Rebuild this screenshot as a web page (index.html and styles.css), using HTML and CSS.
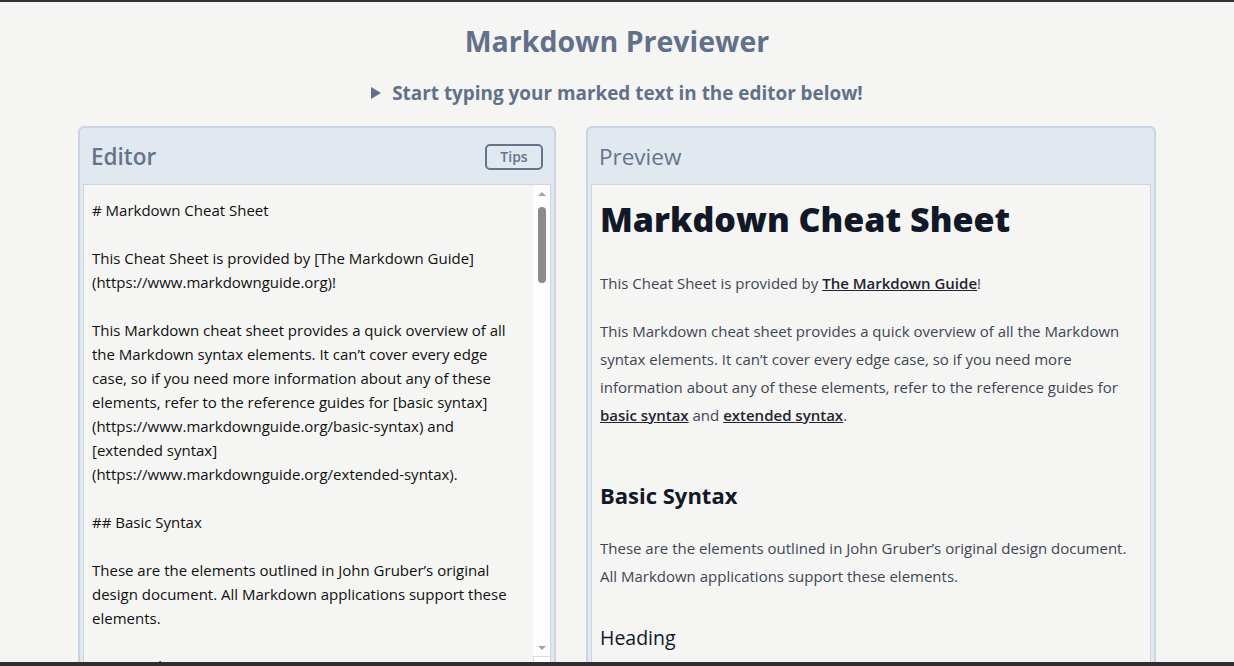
FILE: index.html
```html
<!DOCTYPE html>
<html lang="en">
<head>
<meta charset="utf-8">
<title>Markdown Previewer</title>
<link rel="stylesheet" href="styles.css">
</head>
<body>
<header class="top">
  <h1 class="title">Markdown Previewer</h1>
  <p class="subtitle"><span class="tri"></span>Start typing your marked text in the editor below!</p>
</header>
<main class="panels">
  <section class="panel editor-panel">
    <div class="panel-head">
      <h2 class="panel-title editor-title">Editor</h2>
      <button class="tips">Tips</button>
    </div>
    <div class="editor-box">
      <div class="editor-text"># Markdown Cheat Sheet

This Cheat Sheet is provided by [The Markdown Guide]
(https://www.markdownguide.org)!

This Markdown cheat sheet provides a quick overview of all
the Markdown syntax elements. It can’t cover every edge
case, so if you need more information about any of these
elements, refer to the reference guides for [basic syntax]
(https://www.markdownguide.org/basic-syntax) and
[extended syntax]
(https://www.markdownguide.org/extended-syntax).

## Basic Syntax

These are the elements outlined in John Gruber’s original
design document. All Markdown applications support these
elements.

### Heading

# H1
## H2
### H3</div>
      <div class="scrollbar">
        <div class="arrow arrow-up"></div>
        <div class="thumb"></div>
        <div class="spacer"></div>
        <div class="arrow arrow-down"></div>
        <div class="corner"></div>
      </div>
    </div>
  </section>
  <section class="panel preview-panel">
    <div class="panel-head">
      <h2 class="panel-title preview-title">Preview</h2>
    </div>
    <div class="preview-box">
      <h1 class="md-h1">Markdown Cheat Sheet</h1>
      <p class="md-p">This Cheat Sheet is provided by <a class="md-a" href="#">The Markdown Guide</a>!</p>
      <p class="md-p">This Markdown cheat sheet provides a quick overview of all the Markdown syntax elements. It can’t cover every edge case, so if you need more information about any of these elements, refer to the reference guides for <a class="md-a" href="#">basic syntax</a> and <a class="md-a" href="#">extended syntax</a>.</p>
      <h2 class="md-h2">Basic Syntax</h2>
      <p class="md-p">These are the elements outlined in John Gruber’s original design document. All Markdown applications support these elements.</p>
      <h3 class="md-h3">Heading</h3>
      <h1 class="md-h1">H1</h1>
    </div>
  </section>
</main>
<div class="frame-bottom"></div>
</body>
</html>
```

FILE: styles.css
```css
* { box-sizing: border-box; }

html, body {
  margin: 0;
  padding: 0;
}

body {
  background: #f5f5f3;
  border-top: 2px solid #333335;
  font-family: "Open Sans", "Noto Sans", Lato, sans-serif;
  color: #111827;
  overflow: hidden;
  height: 666px;
}

.top {
  padding-top: 19px;
  text-align: center;
  color: #627189;
}

.title {
  margin: 0;
  font-size: 28.5px;
  line-height: 40px;
  font-weight: 700;
}

.subtitle {
  margin: 18px 0 0;
  font-size: 18.9px;
  line-height: 28px;
  font-weight: 700;
  display: flex;
  align-items: center;
  justify-content: center;
}

.tri {
  width: 0;
  height: 0;
  border-top: 6px solid transparent;
  border-bottom: 6px solid transparent;
  border-left: 10px solid #627189;
  margin-right: 11px;
}

.panels {
  margin-top: 19px;
  display: grid;
  grid-template-columns: 478px 570px;
  column-gap: 30px;
  justify-content: center;
}

.panel {
  background: #e2e8f0;
  border: 2px solid #cbd5e1;
  border-radius: 6px;
  padding: 0 3px;
  height: 560px;
  overflow: hidden;
}

.panel-head {
  height: 56px;
  display: flex;
  align-items: center;
  justify-content: space-between;
  padding: 1px 8px 0 8px;
}

.panel-title {
  margin: 0;
  font-size: 22.5px;
  line-height: 30px;
  color: #64748b;
}

.editor-title { font-weight: 600; }
.preview-title { font-weight: 400; }

.tips {
  font-family: inherit;
  font-size: 14px;
  font-weight: 600;
  color: #64748b;
  background: transparent;
  border: 2px solid #64748b;
  border-radius: 5px;
  width: 58px;
  height: 26px;
  padding: 0;
  line-height: 20px;
}

.editor-box {
  display: flex;
  height: 490px;
  border: 1px solid #cbd5e1;
  background: #f5f5f3;
}

.editor-text {
  flex: 1;
  overflow: hidden;
  white-space: pre;
  padding: 13px 8px 0 8px;
  font-size: 15px;
  line-height: 24px;
  color: #111111;
}

.scrollbar {
  width: 17px;
  display: flex;
  flex-direction: column;
  align-items: center;
  background: #fdfdfd;
}

.arrow {
  width: 17px;
  height: 17px;
  display: flex;
  align-items: center;
  justify-content: center;
}

.arrow::before {
  content: "";
  border-left: 4px solid transparent;
  border-right: 4px solid transparent;
}

.arrow-up::before { border-bottom: 4px solid #a3a3a3; }
.arrow-down::before { border-top: 4px solid #a3a3a3; }

.thumb {
  margin-top: 5px;
  width: 8px;
  height: 76px;
  border-radius: 4px;
  background: #8b8b8b;
}

.spacer { flex: 1; }

.corner {
  width: 17px;
  height: 17px;
  background: #ffffff;
  border-top: 1px solid #dcdcdc;
  border-left: 1px solid #dcdcdc;
}

.preview-box {
  height: 490px;
  border: 1px solid #cbd5e1;
  background: #f5f5f3;
  padding: 14px 10px 0 8px;
  overflow: hidden;
}

.md-h1 {
  margin: 0 0 30px;
  font-size: 34px;
  line-height: 40px;
  font-weight: 800;
  color: #111827;
}

.md-p {
  margin: 0 0 20px;
  font-size: 15px;
  line-height: 28px;
  color: #3f4654;
}

.md-a {
  color: #1f2430;
  font-weight: 600;
  text-decoration: underline;
}

.md-h2 {
  margin: 50px 0 23px;
  font-size: 22px;
  line-height: 32px;
  font-weight: 700;
  color: #111827;
}

.md-h3 {
  margin: 33px 0 20px;
  font-size: 19.5px;
  line-height: 30px;
  font-weight: 500;
  color: #111827;
}

.frame-bottom {
  position: fixed;
  left: 0;
  right: 0;
  bottom: 0;
  height: 4px;
  background: #2e2e30;
}
```
